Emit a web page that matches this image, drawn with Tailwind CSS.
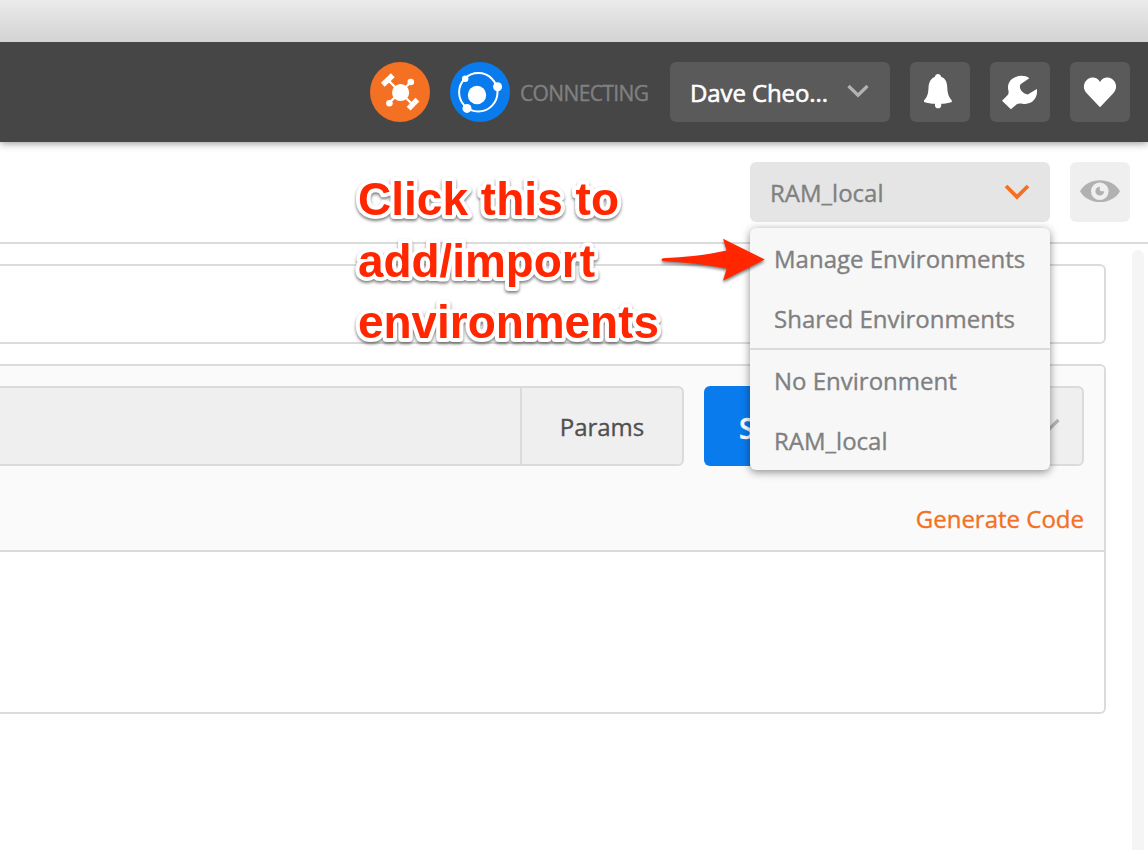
<!DOCTYPE html>
<html lang="en">
<head>
<meta charset="utf-8">
<title>Environments</title>
<script src="https://cdn.jsdelivr.net/npm/@tailwindcss/browser@4"></script>
</head>
<body class="relative flex h-[850px] w-[1148px] flex-col overflow-hidden bg-white font-['Open_Sans',sans-serif] text-[24px] leading-none text-[#808080] [-webkit-text-stroke:0.35px_currentColor]">
  <div class="h-[42px] shrink-0 bg-linear-to-b from-[#ebebeb] to-[#d3d3d3]"></div>

  <header class="z-10 flex h-[100px] shrink-0 items-center justify-end bg-[#464646] pr-[18px] shadow-[0_1px_8px_rgba(0,0,0,0.45)] [clip-path:inset(0_0_-12px_0)]">
    <svg class="mr-5 size-[60px]" viewBox="0 0 60 60">
      <circle cx="30" cy="30" r="30" fill="#f47023"/>
      <g stroke="#fff" fill="none">
        <path d="M18 18L43 43M41 20L19 41" stroke-width="2.4"/>
        <path d="M12.8 22.8L22.8 13.2M38.6 46.6L47.4 37.6" stroke-width="5.4"/>
      </g>
      <g fill="#fff"><circle cx="30.6" cy="30.5" r="8.6"/><circle cx="40.8" cy="20" r="3.3"/><circle cx="19.4" cy="41.2" r="3.3"/></g>
    </svg>
    <svg class="mr-[10px] size-[60px]" viewBox="0 0 60 60">
      <circle cx="30" cy="30" r="30" fill="#097bed"/>
      <circle cx="28.3" cy="30.3" r="19.2" fill="none" stroke="#fff" stroke-width="2"/>
      <g fill="#fff"><circle cx="27" cy="33" r="9.2"/><circle cx="15.2" cy="16.7" r="3.2"/><circle cx="47.6" cy="24.7" r="4.5"/><circle cx="17" cy="46.4" r="4.5"/></g>
    </svg>
    <span class="w-[150px] pt-[2px] text-[21px] tracking-[-0.63px] text-[#808080]">CONNECTING</span>
    <button class="mr-5 flex h-[60px] w-[220px] items-center justify-between rounded-md bg-[#5a5a5a] pr-[21px] pl-5 text-white">
      <span class="w-[137px] overflow-hidden py-1 pt-[6px] text-left tracking-[-0.1px] whitespace-nowrap [-webkit-text-stroke:0.6px_white]">Dave Cheo...</span>
      <svg class="mb-[2px] h-[14px] w-[22px]" viewBox="0 0 22 14" fill="none" stroke="#b3b3b3" stroke-width="3.2"><path d="M1.5 2L11 11.2L20.5 2"/></svg>
    </button>
    <button class="mr-5 flex size-[60px] items-center justify-center rounded-md bg-[#5a5a5a]">
      <svg class="size-[60px]" viewBox="0 0 60 60" fill="#fff"><path d="M25 14.7C25.2 11.2 30.8 11.2 31 14.7C36 16.4 37.2 20.8 37.3 26C37.6 31.6 38.7 35 41.8 38.4V40C38.5 41.1 34.8 41.7 31.2 41.8V43.8C31.2 47.2 25 47.2 25 43.8V41.8C21 41.7 17.5 41.1 14 40V38.4C17.5 35 18.3 31 18.5 26C18.7 20.8 20.5 16.4 25 14.7Z"/></svg>
    </button>
    <button class="mr-5 flex size-[60px] items-center justify-center rounded-md bg-[#5a5a5a]">
      <svg class="size-[60px]" viewBox="0 0 60 60" fill="#fff"><path d="M39.3 16.2C35 13 27.3 13 22.3 16.7C18.2 19.8 17.2 24.3 18.5 29C18.9 31.5 18.2 32.5 17 33.7L12 38.8L20.9 47.2L26.5 42.4C28 41.2 30 41.2 32.5 41.7C36.8 42.7 41.7 41.2 44.3 37.6C46.7 34.2 47.5 30.8 46.8 27.1L37.8 32.4C32 31.4 28.5 26.5 30.5 22.2Z"/></svg>
    </button>
    <button class="flex size-[60px] items-center justify-center rounded-md bg-[#5a5a5a]">
      <svg class="size-[60px]" viewBox="0 0 60 60" fill="#fff"><path d="M30 20C32.5 15.2 38.5 14.3 42.4 17.3C47 20.8 47.3 27.2 43.3 31.2L30 45.2L16.7 31.2C12.7 27.2 13 20.8 17.6 17.3C21.5 14.3 27.5 15.2 30 20Z"/></svg>
    </button>
  </header>

  <section class="flex h-[102px] shrink-0 items-start justify-end gap-5 border-b-2 border-[#dbdbdb] pt-5 pr-[18px]">
    <div class="relative z-20">
      <button class="flex h-[60px] w-[300px] items-center justify-between rounded-md bg-[#e5e5e5] pr-5 pl-5">
        <span class="pt-[2px]">RAM_local</span>
        <svg class="h-[16px] w-[26px]" viewBox="0 0 26 16" fill="none" stroke="#f47023" stroke-width="3.8"><path d="M2 2L13 13L24 2"/></svg>
      </button>
      <ul class="absolute top-[66px] left-0 w-[300px] rounded-md bg-[#f7f7f7] shadow-[0_2px_8px_rgba(0,0,0,0.45)]">
        <li class="flex h-[60px] items-center pt-[1px] pl-6">Manage Environments</li>
        <li class="flex h-[60px] items-center pt-[1px] pl-6">Shared Environments</li>
        <li class="flex h-[62px] items-center border-t-2 border-[#dbdbdb] pt-[1px] pl-6">No Environment</li>
        <li class="flex h-[60px] items-center pt-[1px] pl-6">RAM_local</li>
      </ul>
    </div>
    <button class="size-[60px] rounded-md bg-[#efefef]">
      <svg class="size-[60px]" viewBox="0 0 60 60"><path d="M10 29.3C18 14.5 42 14.5 50 29.3C42 43.7 18 43.7 10 29.3Z" fill="#b1b1b1"/><circle cx="29.8" cy="29.2" r="8.8" fill="#efefef"/><path d="M29.8 24.8A4.4 4.4 0 1 0 34.2 29.2H31.5A1.8 1.8 0 0 1 29.8 27.5Z" fill="#b1b1b1"/></svg>
    </button>
  </section>

  <main class="flex min-h-0 flex-1 items-start pt-[6px] pr-1">
    <div class="flex flex-1 flex-col gap-5 pt-[14px] pr-[26px]">
      <div class="h-20 rounded-r-md border-y-2 border-r-2 border-[#dbdbdb]"></div>
      <div class="h-[350px] overflow-hidden rounded-r-md border-y-2 border-r-2 border-[#dbdbdb]">
        <div class="h-[186px] border-b-2 border-[#dbdbdb] bg-[#fafafa] pt-5 pr-5">
          <div class="flex h-20">
            <div class="flex-1 border-y-2 border-[#dbdbdb] bg-[#efefef]"></div>
            <button class="mr-5 flex w-[164px] items-center justify-center rounded-r-md border-2 border-[#dbdbdb] bg-[#efefef] pt-[2px] text-[#505050]">Params</button>
            <button class="mr-5 w-[200px] rounded-md bg-[#097bed] pt-1 pl-[35px] text-left text-[28px] font-semibold text-white">Send</button>
            <button class="flex w-[160px] items-center justify-end rounded-md border-2 border-[#dbdbdb] bg-[#efefef] pr-[22px]">
              <svg class="mb-[2px] h-[14px] w-[22px]" viewBox="0 0 22 14" fill="none" stroke="#b3b3b3" stroke-width="3.2"><path d="M1.5 2L11 11.2L20.5 2"/></svg>
            </button>
          </div>
          <div class="pt-[41px] text-right text-[#f47023]">Generate Code</div>
        </div>
      </div>
    </div>
    <div class="h-[620px] w-3 rounded-t-full bg-[#f5f5f5]"></div>
  </main>

  <svg class="absolute top-[160px] left-[340px] z-30 h-[200px] w-[340px] font-['Liberation_Sans',sans-serif] text-[46px] font-bold drop-shadow-[0_2px_1.5px_rgba(0,0,0,0.5)] [-webkit-text-stroke:0]" viewBox="0 0 340 200">
    <g class="[paint-order:stroke_fill]" fill="#ff2600" stroke="#fff" stroke-width="8" stroke-linejoin="round">
      <text x="18" y="55" textLength="261">Click this to</text>
      <text x="18" y="117" textLength="237">add/import</text>
      <text x="18" y="178" textLength="301">environments</text>
    </g>
  </svg>
  <svg class="absolute top-[230px] left-[655px] z-30 h-[60px] w-[115px] drop-shadow-[0_2px_1.5px_rgba(0,0,0,0.5)]" viewBox="0 0 115 60" fill="#ff2600"><path d="M8 28.2C30 27.2 52 25 71.7 20.5L68 8.7L109.8 29.6L68 50.7L71.7 38.7C52 34.3 30 32.3 8 31.2Q5 29.7 8 28.2Z"/></svg>
</body>
</html>
